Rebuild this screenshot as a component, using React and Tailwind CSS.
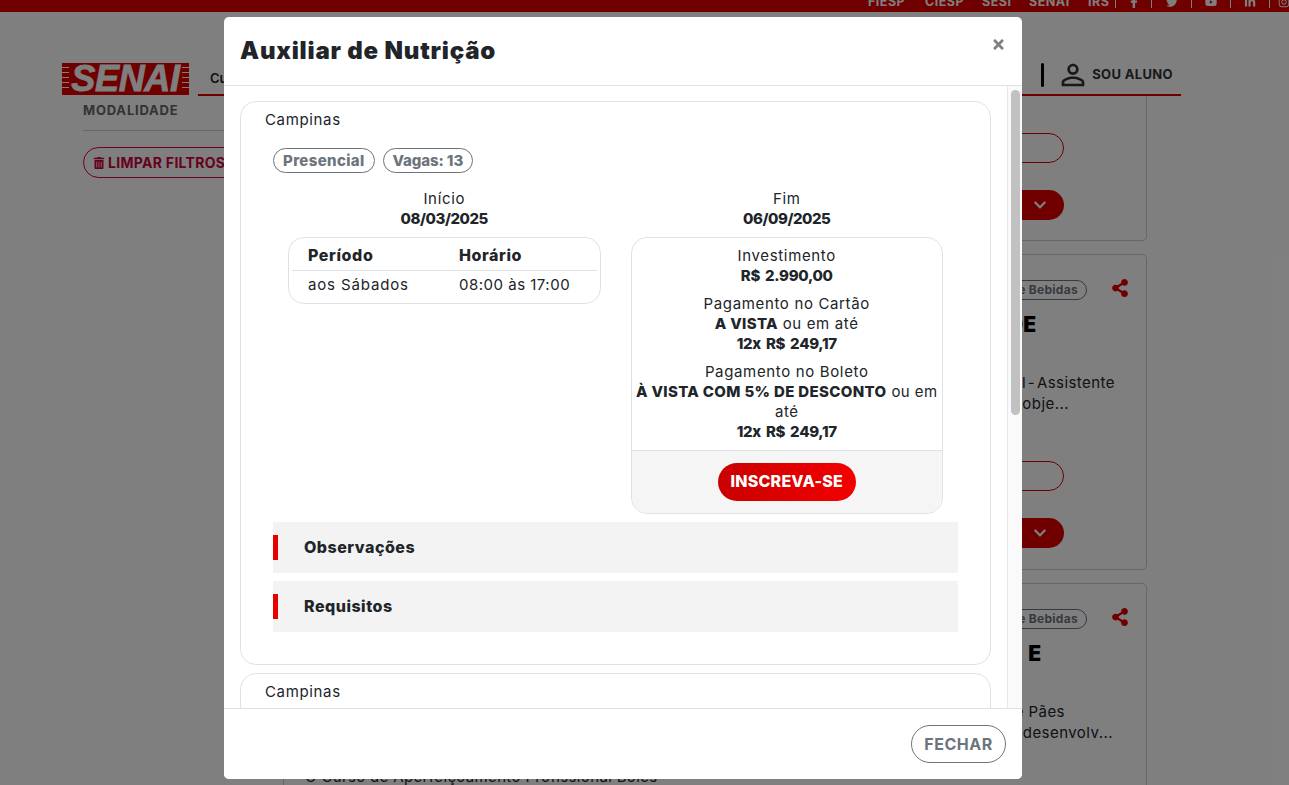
import React from "react";
import { FaFacebookF, FaTwitter, FaYoutube, FaLinkedinIn, FaInstagram, FaTrashAlt, FaShareAlt, FaChevronDown, FaTimes } from "react-icons/fa";
import { MdPersonOutline } from "react-icons/md";

const Sep = () => <span className="w-px h-[10px] mt-[1px] bg-white" />;

function TopBar() {
  return (
    <div className="h-3 bg-[#e00000] overflow-hidden flex justify-end shrink-0">
      <div className="h-3 -mt-[4px] flex items-center text-white text-[12.5px] font-bold tracking-[0.5px] whitespace-nowrap -mr-[9px]">
        <span className="w-[57px]">FIESP</span>
        <span className="w-[57px]">CIESP</span>
        <span className="w-[47px]">SESI</span>
        <span className="w-[59px]">SENAI</span>
        <span className="w-[27px]">IRS</span>
        <Sep />
        <span className="w-[35px] flex justify-center"><FaFacebookF size={12} /></span>
        <Sep />
        <span className="w-[39px] flex justify-center"><FaTwitter size={12} /></span>
        <Sep />
        <span className="w-[38px] flex justify-center"><FaYoutube size={12} /></span>
        <Sep />
        <span className="w-[38px] flex justify-center"><FaLinkedinIn size={12} /></span>
        <Sep />
        <span className="w-[28px] flex justify-center"><FaInstagram size={12} /></span>
      </div>
    </div>
  );
}

function Logo() {
  return (
    <div className="w-[127px] h-8 bg-[#e00000] flex items-center justify-center shrink-0 relative">
      <div className="absolute left-0 top-1 bottom-1 w-[7px] bg-[repeating-linear-gradient(to_bottom,#fff_0,#fff_1px,transparent_1px,transparent_5px)]" />
      <div className="absolute right-0 top-1 bottom-1 w-[7px] bg-[repeating-linear-gradient(to_bottom,#fff_0,#fff_1px,transparent_1px,transparent_5px)]" />
      <span className="text-white text-[36px] leading-none font-bold italic tracking-[-0.3px] [-webkit-text-stroke:0.8px_white] font-['Liberation_Sans',sans-serif]">SENAI</span>
    </div>
  );
}

function Header() {
  return (
    <div className="flex items-end pl-[62px] pr-[108px] mt-[51px] shrink-0">
      <div className="mb-px"><Logo /></div>
      <div className="ml-[9px] flex-1 h-[33px] border-b-2 border-[#e00000] flex items-center justify-between pl-3 pr-2">
        <span className="text-[13px] font-semibold text-[#212529]">Cursos</span>
        <div className="flex items-center -mt-[8px]">
          <span className="w-[3px] h-6 bg-black rounded-sm mr-[15px]" />
          <MdPersonOutline size={34} className="text-[#333] -mx-[3px]" />
          <span className="ml-[5px] text-[13px] font-bold tracking-[0.35px] text-[#333]">SOU ALUNO</span>
        </div>
      </div>
    </div>
  );
}

function Buttons() {
  return (
    <div className="flex flex-col items-end pr-[82px]">
      <div className="w-[200px] h-[30px] border border-[#e00000] rounded-full" />
      <div className="w-[200px] h-[30px] mt-[27px] bg-[#e00000] rounded-full flex items-center justify-end pr-[17px] text-white">
        <FaChevronDown size={14} />
      </div>
    </div>
  );
}

function CourseCard({ title, l1, l2, titleShift }) {
  return (
    <div className="h-[316px] border border-[#ccc] rounded-[5px] pt-[25px] flex flex-col shrink-0">
      <div className="flex items-center justify-end pr-[17px] h-[20px]">
        <span className="h-[20px] px-2 border border-[#6c757d] rounded-full text-[12px] font-bold tracking-[0.3px] leading-[18px] text-[#6c757d] whitespace-nowrap">de Bebidas</span>
        <span className="ml-[24px] -mt-[5px] text-[#e00000]"><FaShareAlt size={18} /></span>
      </div>
      <div className={"mt-[12px] h-[25px] text-right text-[21px] font-black text-black leading-[25px] " + titleShift}>{title}</div>
      <div className="mt-[35px] pr-[31px] h-[42px] text-right text-[15px] tracking-[0.45px] leading-[21px] text-[#212529] flex flex-col items-end">
        <span className={l1.c}>{l1.t}</span>
        <span className={l2.c}>{l2.t}</span>
      </div>
      <div className="mt-[47px]"><Buttons /></div>
    </div>
  );
}

function Background() {
  return (
    <div className="h-[785px] overflow-hidden bg-white flex flex-col">
      <TopBar />
      <Header />
      <div className="flex pl-[83px] pr-[142px]">
        <div className="w-[200px] shrink-0 pt-[6px]">
          <div className="text-[13px] font-bold tracking-[0.8px] text-[#666] leading-[16px]">MODALIDADE</div>
          <div className="h-px bg-[#ccc] mt-[12px]" />
          <div className="mt-4 h-[31px] w-[190px] border border-[#e00040] rounded-full flex items-center pl-[9px] text-[14px] font-bold tracking-[0.3px] text-[#d0003c] whitespace-nowrap gap-[3px]">
            <FaTrashAlt size={12} /> LIMPAR FILTROS
          </div>
        </div>
        <div className="flex-1 flex flex-col gap-[13px]">
          <div className="h-[145px] border border-[#ccc] border-t-0 rounded-b-[5px] pt-[37px] shrink-0">
            <Buttons />
          </div>
          <CourseCard title="DE" titleShift="pr-[110px]" l1={{ t: "l - Assistente", c: "[word-spacing:-3px]" }} l2={{ t: "r obje...", c: "mr-[46px]" }} />
          <div className="relative">
            <CourseCard title="E" titleShift="pr-[105px]" l1={{ t: "e Pães", c: "mr-[50px]" }} l2={{ t: "o desenvolv...", c: "mr-[2px] tracking-0" }} />
            <div className="absolute left-[22px] top-[183px] text-[15px] text-[#212529] tracking-[0.35px] whitespace-nowrap">O Curso de Aperfeiçoamento Profissional Boles</div>
          </div>
        </div>
      </div>
    </div>
  );
}

function Pill({ children, className }) {
  return <span className={"h-[25px] px-[9px] border border-[#6c757d] rounded-full text-[#6c757d] text-[15px] font-extrabold leading-[23px] whitespace-nowrap " + className}>{children}</span>;
}

function Accordion({ children }) {
  return (
    <div className="h-[51px] bg-[#f3f3f3] flex items-center relative pl-[31px] pb-[2px] text-[16px] font-extrabold tracking-[0.5px] text-[#212529]">
      <span className="absolute left-0 top-[13px] w-[5px] h-[25px] bg-[#e60000]" />
      {children}
    </div>
  );
}

function Line({ children }) {
  return <div className="leading-[20px]">{children}</div>;
}

const Price = ({ children }) => <b className="font-extrabold tracking-[-0.3px] [word-spacing:2px]">{children}</b>;

function Modal() {
  return (
    <div className="absolute inset-0 bg-black/50 z-10">
      <div className="absolute left-[224px] top-[17px] w-[798px] h-[762px] bg-white rounded-[5px] overflow-hidden flex flex-col text-[#212529] text-[15px] tracking-[0.65px]">
        <div className="h-[69px] shrink-0 border-b border-[#dee2e6] flex items-start justify-between pl-4 pr-[16px]">
          <h1 className="mt-[19px] text-[24px] leading-[30px] font-black tracking-[0.8px]">Auxiliar de Nutrição</h1>
          <span className="mt-[20px] text-[#808080]"><FaTimes size={15} /></span>
        </div>
        <div className="flex-1 min-h-0 overflow-hidden relative pl-4 pr-[31px] pt-[15px]">
          <div className="absolute right-0 top-0 bottom-0 w-[15px] bg-[#fafafa] border-l border-[#e8e8e8]">
            <div className="mt-[4px] ml-[3px] w-[9px] h-[325px] bg-[#c1c1c1] rounded-full" />
          </div>
          <div className="h-[564px] border border-[#dee2e6] rounded-[16px] pl-8 pr-8">
            <div className="-ml-2 mt-[8px] leading-[20px]">Campinas</div>
            <div className="mt-[18px] flex gap-2"><Pill className="tracking-[0.35px]">Presencial</Pill><Pill className="tracking-[-0.1px]">Vagas: 13</Pill></div>
            <div className="mt-[16px] grid grid-cols-2">
              <div className="px-[15px] text-center">
                <Line>Início</Line>
                <Line><b className="font-extrabold tracking-[-0.45px]">08/03/2025</b></Line>
                <div className="mt-[8px] h-[67px] border border-[#dee2e6] rounded-[16px] px-1 pt-[7px] text-left">
                  <div className="grid grid-cols-[151px_1fr] pl-[16px] h-[26px] text-[16px] tracking-[0.6px] font-extrabold leading-[20px] border-b border-[#dee2e6] -mx-px">
                    <span>Período</span><span>Horário</span>
                  </div>
                  <div className="grid grid-cols-[151px_1fr] pl-[15px] mt-1 leading-[20px]">
                    <span className="tracking-[0.85px]">aos Sábados</span><span className="tracking-[0.5px]">08:00 às 17:00</span>
                  </div>
                </div>
              </div>
              <div className="px-[15px] text-center">
                <Line>Fim</Line>
                <Line><b className="font-extrabold tracking-[-0.45px]">06/09/2025</b></Line>
                <div className="mt-[8px] h-[277px] border border-[#dee2e6] rounded-[16px] overflow-hidden flex flex-col">
                  <div className="h-[212px] pt-2 px-[3px]">
                    <Line>Investimento</Line>
                    <Line><Price>R$ 2.990,00</Price></Line>
                    <div className="mt-2"><Line>Pagamento no Cartão</Line></div>
                    <Line><b className="font-extrabold tracking-[0.3px]">A VISTA</b> ou em até</Line>
                    <Line><Price>12x R$ 249,17</Price></Line>
                    <div className="mt-2"><Line>Pagamento no Boleto</Line></div>
                    <Line><b className="font-extrabold tracking-[0.35px]">À VISTA COM 5% DE DESCONTO</b> <span className="tracking-[0.45px]">ou em até</span></Line>
                    <Line><Price>12x R$ 249,17</Price></Line>
                  </div>
                  <div className="flex-1 bg-[#f5f5f5] border-t border-[#dee2e6] flex items-center justify-center">
                    <span className="w-[138px] h-[38px] rounded-full bg-gradient-to-r from-[#c80000] to-[#f50000] text-white font-extrabold text-[16px] tracking-[0.2px] leading-[36px]">INSCREVA-SE</span>
                  </div>
                </div>
              </div>
            </div>
            <div className="mt-2 flex flex-col gap-2">
              <Accordion>Observações</Accordion>
              <Accordion>Requisitos</Accordion>
            </div>
          </div>
          <div className="mt-2 h-[200px] border border-[#dee2e6] rounded-[16px] pl-6 pt-2 leading-[20px]">Campinas</div>
        </div>
        <div className="h-[71px] shrink-0 border-t border-[#dee2e6] bg-white flex items-center justify-end pr-4 z-10">
          <span className="w-[95px] h-[38px] border border-[#6c757d] rounded-full text-center text-[#6c757d] text-[16px] font-bold tracking-[0.5px] leading-[36px]">FECHAR</span>
        </div>
      </div>
    </div>
  );
}

export default function App() {
  return (
    <div className="relative h-[785px] overflow-hidden font-['Inter',sans-serif]">
      <Background />
      <Modal />
    </div>
  );
}
